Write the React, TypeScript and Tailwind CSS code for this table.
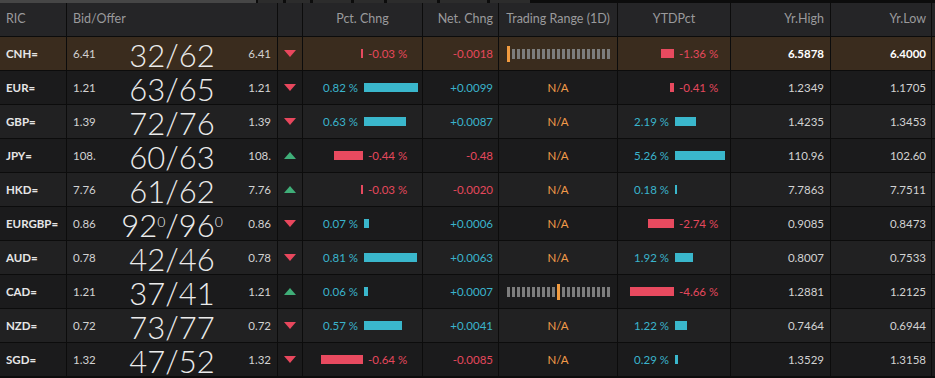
import React from 'react'

type Row = {
  ric: string
  bid: string
  big: React.ReactNode
  up: boolean
  pct: number
  net: string
  range: 'na' | number
  ytd: number
  high: string
  low: string
  hl?: boolean
}

const rows: Row[] = [
  { ric: 'CNH=', bid: '6.41', big: '32/62', up: false, pct: -0.03, net: '-0.0018', range: 0, ytd: -1.36, high: '6.5878', low: '6.4000', hl: true },
  { ric: 'EUR=', bid: '1.21', big: '63/65', up: false, pct: 0.82, net: '+0.0099', range: 'na', ytd: -0.41, high: '1.2349', low: '1.1705' },
  { ric: 'GBP=', bid: '1.39', big: '72/76', up: false, pct: 0.63, net: '+0.0087', range: 'na', ytd: 2.19, high: '1.4235', low: '1.3453' },
  { ric: 'JPY=', bid: '108.', big: '60/63', up: true, pct: -0.44, net: '-0.48', range: 'na', ytd: 5.26, high: '110.96', low: '102.60' },
  { ric: 'HKD=', bid: '7.76', big: '61/62', up: true, pct: -0.03, net: '-0.0020', range: 'na', ytd: 0.18, high: '7.7863', low: '7.7511' },
  {
    ric: 'EURGBP=', bid: '0.86',
    big: <>92<sup className="text-[14px] -top-[10px]">0</sup>/96<sup className="text-[14px] -top-[10px]">0</sup></>,
    up: false, pct: 0.07, net: '+0.0006', range: 'na', ytd: -2.74, high: '0.9085', low: '0.8473',
  },
  { ric: 'AUD=', bid: '0.78', big: '42/46', up: false, pct: 0.81, net: '+0.0063', range: 'na', ytd: 1.92, high: '0.8007', low: '0.7533' },
  { ric: 'CAD=', bid: '1.21', big: '37/41', up: true, pct: 0.06, net: '+0.0007', range: 10, ytd: -4.66, high: '1.2881', low: '1.2125' },
  { ric: 'NZD=', bid: '0.72', big: '73/77', up: false, pct: 0.57, net: '+0.0041', range: 'na', ytd: 1.22, high: '0.7464', low: '0.6944' },
  { ric: 'SGD=', bid: '1.32', big: '47/52', up: false, pct: -0.64, net: '-0.0085', range: 'na', ytd: 0.29, high: '1.3529', low: '1.3158' },
]

const fmt = (v: number) => `${v.toFixed(2)} %`

// diverging bar: axis in the middle, negative bars grow left, positive right
function Diverge({ v, scale, left }: { v: number; scale: number; left: number }) {
  const w = Math.max(2, Math.round(Math.abs(v) * scale))
  const neg = v < 0
  return (
    <div className="flex h-full items-center">
      <div className="flex h-full shrink-0 items-center justify-end" style={{ width: left }}>
        {neg
          ? <div className="h-[9px] bg-[#e84a5f]" style={{ width: w }} />
          : <span className="mr-[5px] text-[#3ab4cc]">{fmt(v)}</span>}
      </div>
      <div className="flex h-full items-center">
        {neg
          ? <span className="ml-[5px] text-[#e5485c]">{fmt(v)}</span>
          : <div className="ml-px h-[9px] bg-[#3ab7cc]" style={{ width: w }} />}
      </div>
    </div>
  )
}

function Range({ at }: { at: number }) {
  return (
    <div className="flex h-full items-center gap-[2px] pl-[8px]">
      {Array.from({ length: 21 }).map((_, i) =>
        i === at
          ? <div key={i} className="h-[16px] w-[3px] bg-[#f29b3f]" />
          : <div key={i} className="h-[10px] w-[3px] bg-[#7d7d7d]" />
      )}
    </div>
  )
}

const cols = 'grid grid-cols-[67px_211px_25px_120px_76px_119px_113px_100px_101px]'
const cell = 'h-full border-r border-[#0c0c0c]'

export default function App() {
  return (
    <div className="h-[378px] w-[935px] overflow-hidden bg-[#0c0c0c] text-[11.5px]" style={{ fontFamily: 'Lato, "Open Sans", sans-serif' }}>
      {/* top tab strip */}
      <div className="flex h-[3px]">
        <div className="w-[256px] bg-[#464646]" />
        <div className="w-[2px]" />
        <div className="w-[25px] bg-[#2c2c2c]" />
        <div className="w-[3px]" />
        <div className="w-[24px] bg-[#2c2c2c]" />
        <div className="w-[3px]" />
        <div className="w-[38px] bg-[#2c2c2c]" />
        <div className="w-[3px]" />
        <div className="w-[30px] bg-[#2c2c2c]" />
        <div className="w-[3px]" />
        <div className="w-[50px] bg-[#2c2c2c]" />
        <div className="w-[3px]" />
        <div className="w-[47px] bg-[#2c2c2c]" />
        <div className="w-[3px]" />
        <div className="w-[40px] bg-[#2c2c2c]" />
      </div>

      {/* header */}
      <div className={`${cols} h-[34px] border-b border-[#0c0c0c] bg-[#252527] text-[12.5px] text-[#9a9a9c]`}>
        <div className={`${cell} flex items-center pl-[6px]`}>RIC</div>
        <div className={`${cell} flex items-center pl-[6px]`}>Bid/Offer</div>
        <div className={cell} />
        <div className={`${cell} flex items-center justify-center`}>Pct. Chng</div>
        <div className={`${cell} flex items-center justify-end pr-[5px]`}>Net. Chng</div>
        <div className={`${cell} flex items-center justify-center`}>Trading Range (1D)</div>
        <div className={`${cell} flex items-center justify-center`}>YTDPct</div>
        <div className={`${cell} flex items-center justify-end pr-[6px]`}>Yr.High</div>
        <div className={`${cell} flex items-center justify-end pr-[5px]`}>Yr.Low</div>
      </div>

      {rows.map((r, i) => {
        const bg = r.hl ? 'bg-[#3a2c1e]' : i % 2 === 1 ? 'bg-[#1b1b1c]' : 'bg-[#212122]'
        const neg = r.net.startsWith('-')
        return (
          <div key={r.ric} className={`${cols} h-[34px] border-b border-[#0c0c0c] ${bg}`}>
            <div className={`${cell} flex items-center pl-[6px] font-bold text-[#e6e6e6]`}>{r.ric}</div>
            <div className={`${cell} grid grid-cols-[1fr_auto_1fr] items-center px-[6px] text-[#d2d2d2]`}>
              <span>{r.bid}</span>
              <span className="pt-[2px] text-[31px] font-light leading-[28px] text-[#ececec]">{r.big}</span>
              <span className="text-right">{r.bid}</span>
            </div>
            <div className={`${cell} flex items-center justify-center`}>
              {r.up ? (
                <svg width="12" height="7" viewBox="0 0 12 7"><path d="M0 7 L6 0 L12 7 Z" fill="#3fae78" /></svg>
              ) : (
                <svg width="12" height="7" viewBox="0 0 12 7"><path d="M0 0 L12 0 L6 7 Z" fill="#e8475d" /></svg>
              )}
            </div>
            <div className={cell}><Diverge v={r.pct} scale={66} left={60} /></div>
            <div className={`${cell} flex items-center justify-end pr-[5px] ${neg ? 'text-[#e5485c]' : 'text-[#3ab4cc]'}`}>{r.net}</div>
            <div className={cell}>
              {r.range === 'na'
                ? <div className="flex h-full items-center justify-center text-[#f29b4a]">N/A</div>
                : <Range at={r.range} />}
            </div>
            <div className={cell}><Diverge v={r.ytd} scale={9.5} left={56} /></div>
            <div className={`${cell} flex items-center justify-end pr-[6px] ${r.hl ? 'font-bold text-white' : 'text-[#d2d2d2]'}`}>{r.high}</div>
            <div className={`${cell} flex items-center justify-end pr-[5px] ${r.hl ? 'font-bold text-white' : 'text-[#d2d2d2]'}`}>{r.low}</div>
          </div>
        )
      })}
    </div>
  )
}
